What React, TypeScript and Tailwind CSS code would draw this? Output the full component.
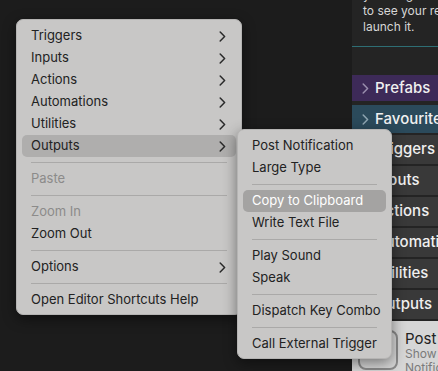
type Item = { label: string; sub?: boolean; disabled?: boolean; active?: boolean; sep?: boolean };

const mainItems: Item[] = [
  { label: "Triggers", sub: true },
  { label: "Inputs", sub: true },
  { label: "Actions", sub: true },
  { label: "Automations", sub: true },
  { label: "Utilities", sub: true },
  { label: "Outputs", sub: true, active: true },
  { label: "", sep: true },
  { label: "Paste", disabled: true },
  { label: "", sep: true },
  { label: "Zoom In", disabled: true },
  { label: "Zoom Out" },
  { label: "", sep: true },
  { label: "Options", sub: true },
  { label: "", sep: true },
  { label: "Open Editor Shortcuts Help" },
];

const outputItems: Item[] = [
  { label: "Post Notification" },
  { label: "Large Type" },
  { label: "", sep: true },
  { label: "Copy to Clipboard", active: true },
  { label: "Write Text File" },
  { label: "", sep: true },
  { label: "Play Sound" },
  { label: "Speak" },
  { label: "", sep: true },
  { label: "Dispatch Key Combo" },
  { label: "", sep: true },
  { label: "Call External Trigger" },
];

const panelRows = ["Triggers", "Inputs", "Actions", "Automations", "Utilities", "Outputs"];

function Chevron({ className }: { className?: string }) {
  return (
    <svg width="7" height="11" viewBox="0 0 7 11" className={`shrink-0 ${className ?? ""}`}>
      <path d="M1.2 1 L5.6 5.5 L1.2 10" fill="none" stroke="currentColor" strokeWidth="1.5" strokeLinecap="round" strokeLinejoin="round" />
    </svg>
  );
}

// menu rows; "submenu" picks the white-on-grey highlight
function MenuList({ items, submenu }: { items: Item[]; submenu?: boolean }) {
  return (
    <>
      {items.map((it, i) => {
        if (it.sep)
          return (
            <div key={i} className="flex h-[11px] items-center px-[9px]">
              <div className="h-px w-full bg-[#aaa9a8]" />
            </div>
          );
        let cls = "text-[#222222]";
        if (it.disabled) cls = "text-[#8c8b8a]";
        if (it.active) cls = submenu ? "bg-[#a4a3a2] text-white" : "bg-[#afaead] text-[#222222]";
        return (
          <div
            key={i}
            className={`flex h-[22px] items-center justify-between whitespace-nowrap rounded-[5px] px-[9px] ${cls}`}
          >
            <span>{it.label}</span>
            {it.sub && <Chevron className="mr-[1px] text-[#2a2a2a]" />}
          </div>
        );
      })}
    </>
  );
}

export default function App() {
  return (
    <div className="relative flex h-[371px] w-[438px] overflow-hidden bg-[#1c1c1c] font-['Inter',sans-serif]">
      <div className="w-[352px] shrink-0" />

      {/* editor side panel */}
      <div className="flex w-[86px] shrink-0 flex-col overflow-hidden bg-[#242424] text-[#f0f0f0]">
        <div className="-mt-[13px] whitespace-nowrap pl-[11px] text-[12px] leading-[16px] text-[#d6d6d6]">
          <div>you drag a trigger</div>
          <div>to see your results</div>
          <div>launch it.</div>
        </div>
        <div className="mt-[11px] h-px shrink-0 bg-[#2e6e74]" />
        <div className="h-[28px] shrink-0" />
        <div className="flex h-[26px] shrink-0 items-center gap-[6px] whitespace-nowrap bg-[#3d2a58] pl-[10px] text-[15px] font-medium">
          <Chevron className="text-[#9a8fae]" />
          <span>Prefabs</span>
        </div>
        <div className="mt-[4px] flex h-[28px] shrink-0 items-center gap-[6px] whitespace-nowrap bg-[#2b4a5b] pl-[10px] text-[15px] font-medium">
          <Chevron className="text-[#8fa6b2]" />
          <span>Favourites</span>
        </div>
        {panelRows.map((r) => (
          <div
            key={r}
            className="mt-[2px] flex h-[29px] shrink-0 items-center gap-[6px] whitespace-nowrap bg-[#393939] pl-[10px] text-[15px] font-medium"
          >
            <Chevron className="text-[#9a9a9a]" />
            <span>{r}</span>
          </div>
        ))}
        <div className="mt-[2px] flex flex-1 gap-[7px] bg-[#d6d6d6] pl-[6px] pt-[9px]">
          <div className="h-[40px] w-[40px] shrink-0 rounded-[8px] border-[2px] border-[#8a8a8a]" />
          <div className="whitespace-nowrap">
            <div className="text-[15px] leading-[17px] text-[#222222]">Post Notification</div>
            <div className="text-[12px] leading-[14px] text-[#7a7a7a]">Show a notification</div>
            <div className="text-[12px] leading-[14px] text-[#7a7a7a]">Notification</div>
          </div>
        </div>
      </div>

      {/* context menu */}
      <div className="absolute left-[16px] top-[19px] w-[226px] rounded-[7px] border border-[#b5b4b3] bg-[#c8c7c6] px-[5px] pb-[3px] pt-[5px] text-[13px] shadow-[0_4px_14px_rgba(0,0,0,0.45)]">
        <MenuList items={mainItems} />
      </div>

      {/* outputs submenu */}
      <div className="absolute left-[237px] top-[129px] w-[155px] rounded-[7px] border border-[#b5b4b3] bg-[#c8c7c6] px-[5px] pb-[3px] pt-[5px] text-[13px] shadow-[0_4px_14px_rgba(0,0,0,0.45)]">
        <MenuList items={outputItems} submenu />
      </div>
    </div>
  );
}
